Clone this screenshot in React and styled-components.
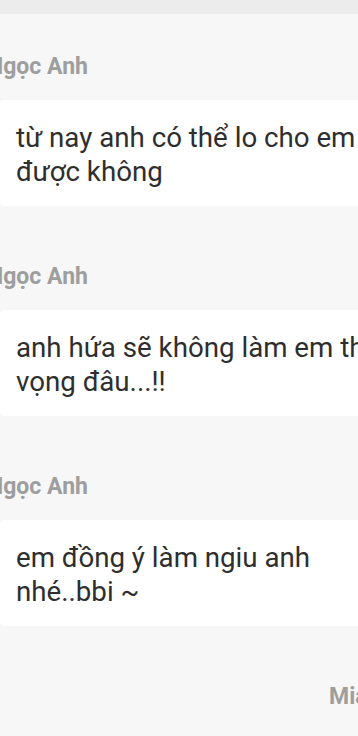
import React from 'react'
import styled, { createGlobalStyle } from 'styled-components'

const GlobalStyle = createGlobalStyle`
  html, body {
    margin: 0;
    padding: 0;
    background: #f7f7f7;
  }
  body {
    font-family: Roboto, "Liberation Sans", sans-serif;
  }
`

const Screen = styled.div`
  width: 358px;
  height: 736px;
  overflow: hidden;
  background: #f7f7f7;
`

const TopStrip = styled.div`
  height: 14px;
  background: #ececec;
`

const Thread = styled.div`
  width: 460px;
  padding-top: 41px;
  display: flex;
  flex-direction: column;
`

const Message = styled.div`
  display: flex;
  flex-direction: column;
  margin-bottom: 59px;
`

const Sender = styled.div`
  font-size: 23px;
  line-height: 24px;
  font-weight: 700;
  color: #9e9e9e;
  white-space: nowrap;
  margin-left: ${p => (p.mine ? '0' : '-13px')};
  padding-left: ${p => (p.mine ? '329px' : '0')};
`

const Bubble = styled.div`
  margin-top: 21px;
  width: 420px;
  background: #ffffff;
  border-radius: 4px;
  padding: 21px 16px 17px;
  box-sizing: border-box;
  font-size: 27.7px;
  line-height: 34px;
  color: #2e2e2e;
`

const Line = styled.div`
  white-space: nowrap;
`

const messages = [
  { from: 'Ngọc Anh', lines: ['từ nay anh có thể lo cho em', 'được không'] },
  { from: 'Ngọc Anh', lines: ['anh hứa sẽ không làm em thất', 'vọng đâu...!!'] },
  { from: 'Ngọc Anh', lines: ['em đồng ý làm ngiu anh', 'nhé..bbi ~'] },
]

export default function App() {
  return (
    <>
      <GlobalStyle />
      <Screen>
        <TopStrip />
        <Thread>
          {messages.map((m, i) => (
            <Message key={i}>
              <Sender>{m.from}</Sender>
              <Bubble>
                {m.lines.map((l, j) => (
                  <Line key={j}>{l}</Line>
                ))}
              </Bubble>
            </Message>
          ))}
          <Message>
            <Sender mine>Mia</Sender>
          </Message>
        </Thread>
      </Screen>
    </>
  )
}
